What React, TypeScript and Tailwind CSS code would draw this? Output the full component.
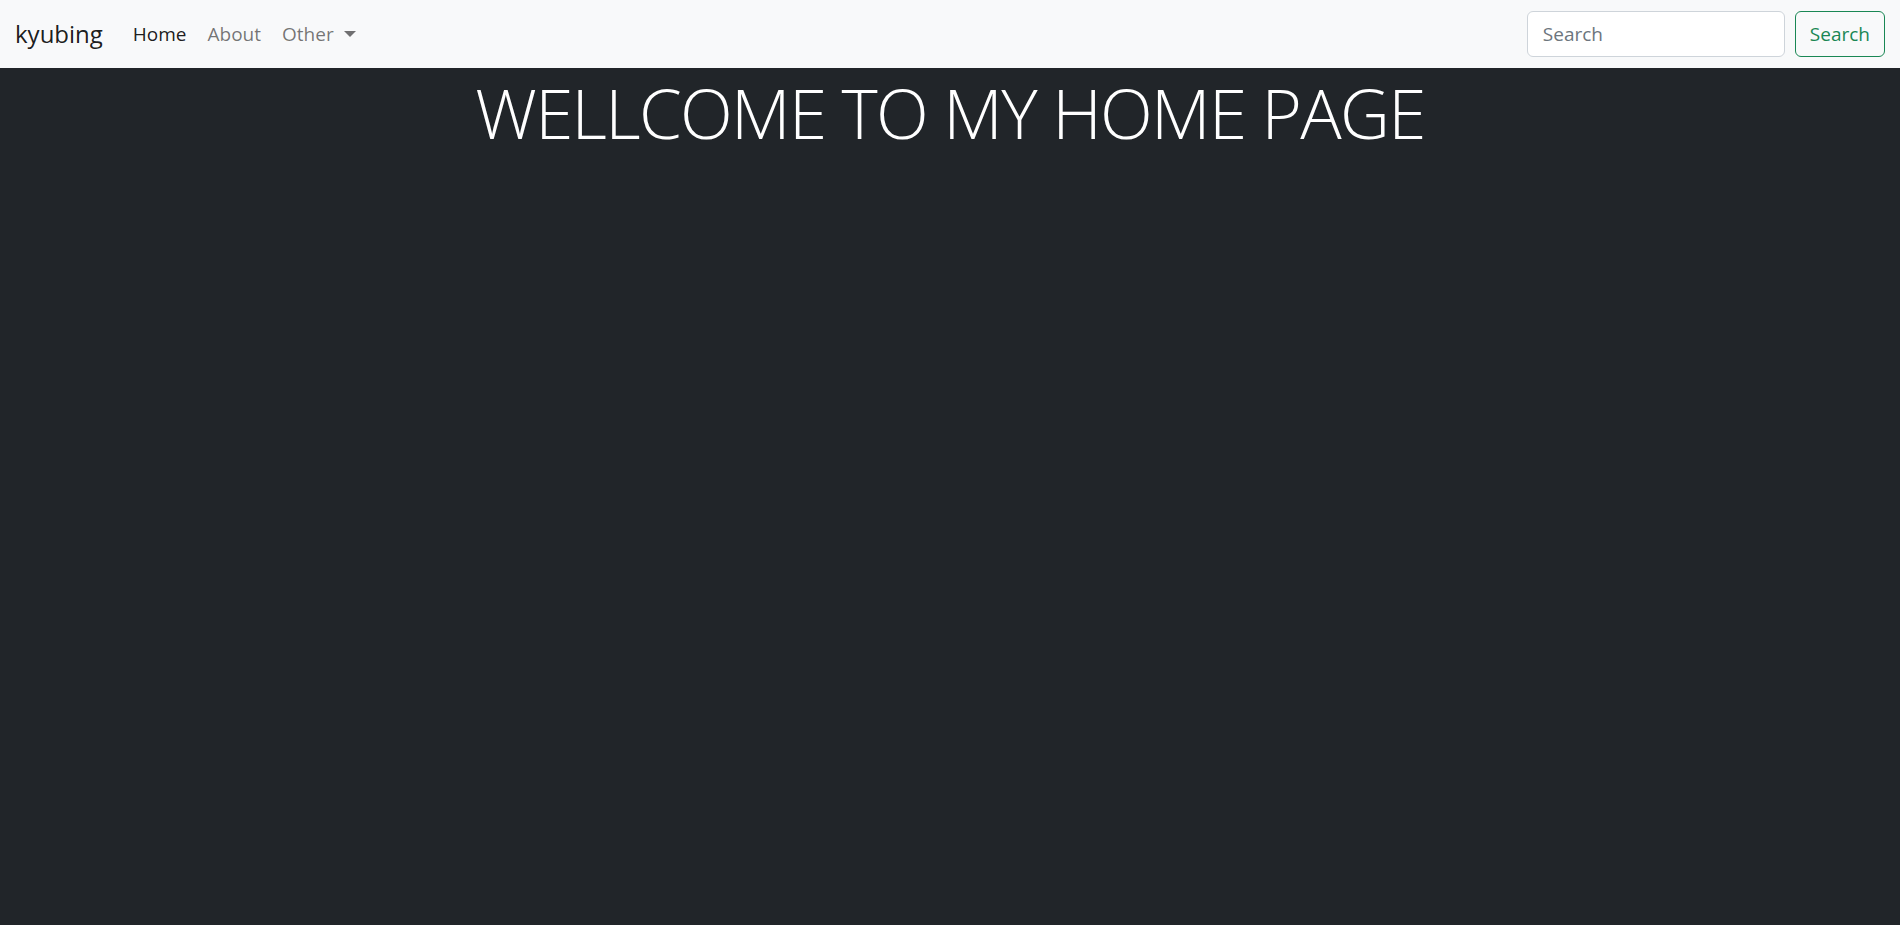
export default function App() {
  return (
    <div className="min-h-screen bg-[#212529]" style={{ fontFamily: "'Open Sans', 'Noto Sans', sans-serif" }}>
      {/* Navbar */}
      <nav className="h-[68px] bg-[#f8f9fa] flex items-center justify-between px-[15px]">
        <div className="flex items-center">
          <a className="text-[24px] text-black/90 mr-[20px] leading-none">kyubing</a>
          <ul className="flex items-center text-[19px] leading-none">
            <li className="px-[10px] text-black/90">Home</li>
            <li className="px-[11px] text-black/55">About</li>
            <li className="px-[10px] text-black/55 flex items-center">
              Other
              <span className="ml-[10px] inline-block w-0 h-0 border-l-[6px] border-r-[6px] border-t-[6px] border-l-transparent border-r-transparent border-t-black/55" />
            </li>
          </ul>
        </div>
        <form className="flex items-center gap-[10px]">
          <input
            type="search"
            placeholder="Search"
            className="w-[258px] h-[46px] px-[15px] text-[19px] bg-white border border-[#ced4da] rounded-[6px] placeholder:text-[#6c757d] outline-none"
          />
          <button
            type="button"
            className="h-[46px] px-[14px] text-[19px] text-[#198754] border border-[#198754] rounded-[6px]"
          >
            Search
          </button>
        </form>
      </nav>

      {/* Heading */}
      <h1 className="mt-[3px] text-center text-white font-light text-[69px] leading-[1.2] tracking-[-1.7px]">
        WELLCOME TO MY HOME PAGE
      </h1>
    </div>
  );
}
